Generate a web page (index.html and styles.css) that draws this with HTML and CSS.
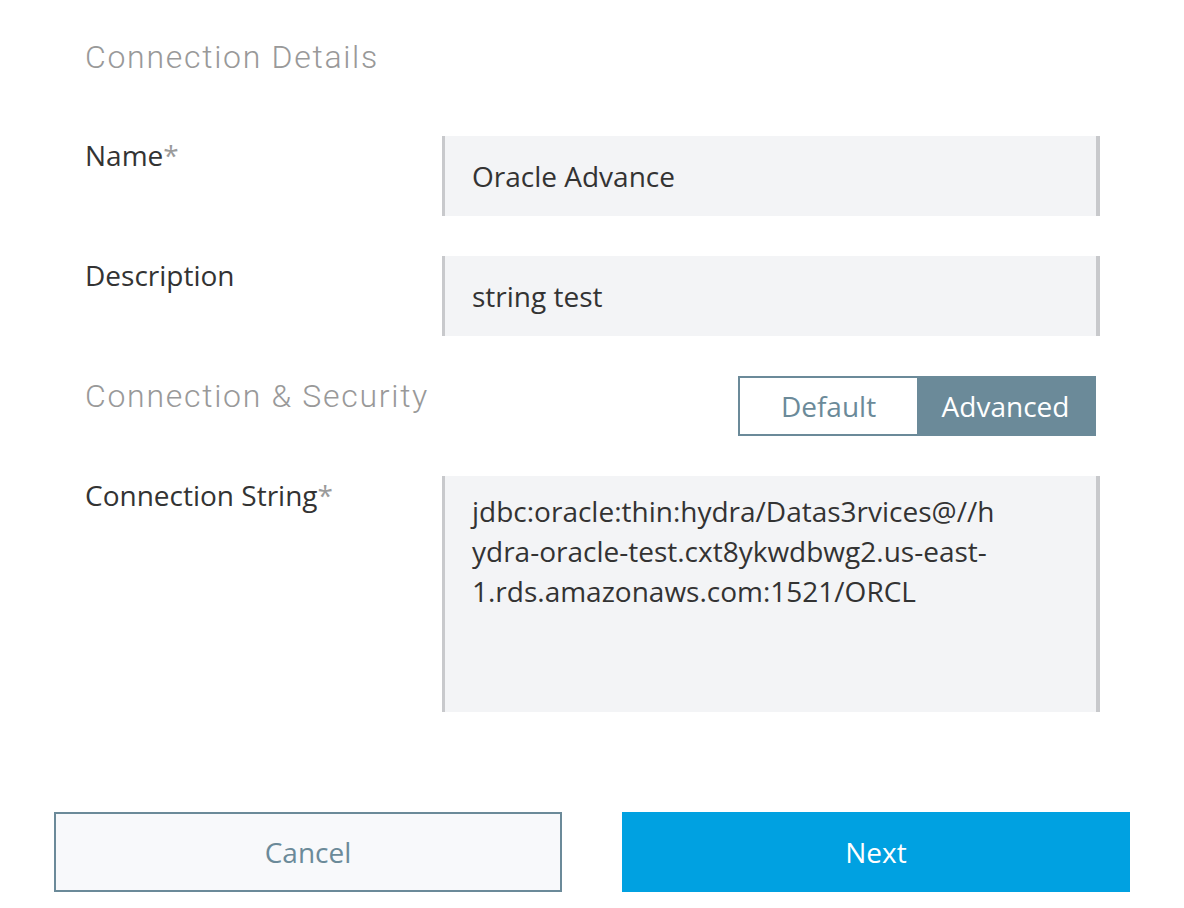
FILE: index.html
```html
<!DOCTYPE html>
<html>
<head>
<meta charset="utf-8">
<link rel="stylesheet" href="styles.css">
</head>
<body>
<div class="page">
  <form class="form">
    <h2 class="section-title first">Connection Details</h2>
    <div class="row">
      <label class="label">Name<span class="req">*</span></label>
      <div class="field input"><span class="value">Oracle Advance</span></div>
    </div>
    <div class="row">
      <label class="label">Description</label>
      <div class="field input"><span class="value">string test</span></div>
    </div>
    <div class="section-row">
      <h2 class="section-title">Connection &amp; Security</h2>
      <div class="toggle">
        <button type="button" class="toggle-btn">Default</button>
        <button type="button" class="toggle-btn active">Advanced</button>
      </div>
    </div>
    <div class="row">
      <label class="label">Connection String<span class="req">*</span></label>
      <div class="field textarea"><span class="line">jdbc:oracle:thin:hydra/Datas3rvices@//h</span><span class="line">ydra-oracle-test.cxt8ykwdbwg2.us-east-</span><span class="line">1.rds.amazonaws.com:1521/ORCL</span></div>
    </div>
  </form>
  <div class="actions">
    <button type="button" class="btn btn-cancel">Cancel</button>
    <button type="button" class="btn btn-next">Next</button>
  </div>
</div>
</body>
</html>
```
FILE: styles.css
```css
* { box-sizing: border-box; }
html, body { margin: 0; padding: 0; background: #ffffff; }
body {
  font-family: "Open Sans", "Liberation Sans", sans-serif;
  color: #333333;
  width: 1184px;
  height: 908px;
  overflow: hidden;
}
.page {
  padding: 37px 54px 0 54px;
}
.form {
  padding: 0 30px 0 31px;
  display: flex;
  flex-direction: column;
  gap: 40px;
}
.section-title {
  margin: 0;
  font-family: Roboto, "Liberation Sans", sans-serif;
  font-weight: 300;
  font-size: 32px;
  line-height: 40px;
  letter-spacing: 1.7px;
  color: #999999;
}
.section-title.first { margin-bottom: 19px; }
.row {
  display: grid;
  grid-template-columns: 357px 658px;
}
.label {
  font-size: 28px;
  line-height: 36px;
  margin-top: 1px;
  color: #333333;
}
.req { color: #9b9b9b; }
.field {
  background: #f3f4f6;
  border-left: 3px solid #c8c9cc;
  border-right: 4px solid #c8c9cc;
  font-size: 28px;
  color: #333333;
}
.input {
  height: 80px;
  padding: 0 27px;
  display: flex;
  align-items: center;
  line-height: 36px;
}
.textarea {
  height: 236px;
  padding: 15px 27px;
  line-height: 40px;
}
.line { display: block; white-space: nowrap; }
.section-row {
  display: flex;
  justify-content: space-between;
  align-items: flex-start;
  height: 60px;
  padding-right: 4px;
}
.toggle {
  display: flex;
  height: 60px;
  border: 2px solid #6b8a99;
}
.toggle-btn {
  width: 177px;
  border: 0;
  margin: 0;
  padding: 0;
  background: #ffffff;
  color: #6b8a99;
  font-family: "Open Sans", "Liberation Sans", sans-serif;
  font-size: 28px;
}
.toggle-btn.active {
  background: #6b8a99;
  color: #ffffff;
}
.actions {
  display: flex;
  gap: 60px;
  margin-top: 100px;
}
.btn {
  width: 508px;
  height: 80px;
  font-family: "Open Sans", "Liberation Sans", sans-serif;
  font-size: 28px;
  padding: 0;
  margin: 0;
}
.btn-cancel {
  background: #f8f9fb;
  border: 2px solid #6b8a99;
  color: #6b8a99;
}
.btn-next {
  background: #00a1e1;
  border: 0;
  color: #ffffff;
}
```
